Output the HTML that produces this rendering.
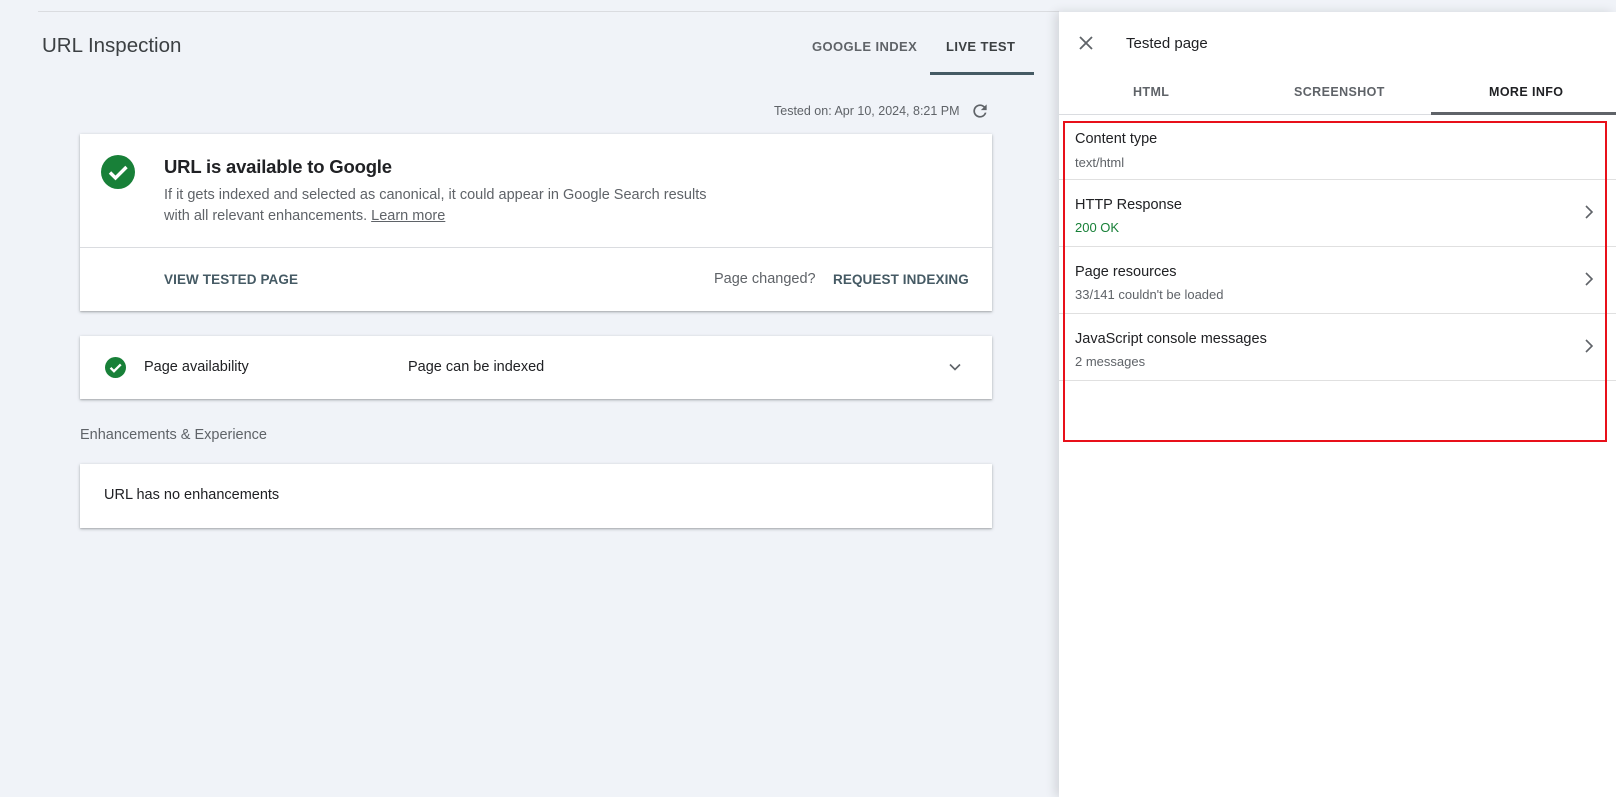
<!DOCTYPE html>
<html><head><meta charset="utf-8"><style>
*{margin:0;padding:0;box-sizing:border-box}
body{width:1616px;height:797px;background:#f0f3f8;font-family:"Liberation Sans",Arial,sans-serif;position:relative;overflow:hidden;color:#202124}
.a{position:absolute;white-space:nowrap}
.card{position:absolute;background:#fff;box-shadow:0 1px 3px rgba(60,64,67,.35),0 1px 1px rgba(60,64,67,.15)}
.tab{font-size:13px;letter-spacing:.4px;font-weight:bold;color:#5f6368}
.row{position:absolute;left:1059px;width:557px;height:67px;border-bottom:1px solid #e0e0e0}
.row .t{position:absolute;left:16px;top:10px;font-size:14.5px;color:#202124}
.row .s{position:absolute;left:16px;top:34px;font-size:13px;color:#5f6368}
.row svg{position:absolute;right:20px;top:24px}
</style></head><body>
<div class="a" style="left:38px;top:11px;width:1021px;height:1px;background:#dadce0"></div>
<div class="a" style="left:42px;top:34px;font-size:20.5px;color:#3c4043">URL Inspection</div>
<div class="a tab" style="left:812px;top:39px">GOOGLE INDEX</div>
<div class="a tab" style="left:946px;top:39px;color:#3c4043">LIVE TEST</div>
<div class="a" style="left:930px;top:72px;width:104px;height:3px;background:#455a64"></div>
<div class="a" style="left:774px;top:104px;font-size:12.5px;color:#5f6368">Tested on: Apr 10, 2024, 8:21 PM</div>
<svg class="a" style="left:970px;top:101px" width="20" height="20" viewBox="0 0 24 24"><path fill="#5f6368" d="M17.65 6.35A7.958 7.958 0 0 0 12 4a8 8 0 1 0 7.73 10h-2.08A5.99 5.99 0 0 1 12 18a6 6 0 1 1 0-12c1.66 0 3.14.69 4.22 1.78L13 11h7V4l-2.35 2.35z"/></svg>

<div class="card" style="left:80px;top:134px;width:912px;height:177px">
  <svg class="a" style="left:21px;top:21px" width="34" height="34" viewBox="0 0 34 34"><circle cx="17" cy="17" r="17" fill="#188038"/><path d="M9 17.5l5.5 5.5L25.5 12" stroke="#fff" stroke-width="3.4" fill="none"/></svg>
  <div class="a" style="left:84px;top:22px;font-size:18.5px;font-weight:bold;letter-spacing:-.2px;color:#202124">URL is available to Google</div>
  <div class="a" style="left:84px;top:51px;font-size:14.5px;color:#5f6368;line-height:21px">If it gets indexed and selected as canonical, it could appear in Google Search results<br>with all relevant enhancements. <span style="text-decoration:underline">Learn more</span></div>
  <div class="a" style="left:0;top:113px;width:912px;height:1px;background:#dadce0"></div>
  <div class="a" style="left:84px;top:138px;font-size:13.5px;font-weight:bold;letter-spacing:.1px;color:#455a64">VIEW TESTED PAGE</div>
  <div class="a" style="left:634px;top:137px;font-size:14.5px;color:#5f6368">Page changed?</div>
  <div class="a" style="left:753px;top:138px;font-size:13.5px;font-weight:bold;letter-spacing:.1px;color:#455a64">REQUEST INDEXING</div>
</div>

<div class="card" style="left:80px;top:336px;width:912px;height:63px">
  <svg class="a" style="left:25px;top:21px" width="21" height="21" viewBox="0 0 34 34"><circle cx="17" cy="17" r="17" fill="#188038"/><path d="M9 17.5l5.5 5.5L25.5 12" stroke="#fff" stroke-width="3.8" fill="none"/></svg>
  <div class="a" style="left:64px;top:23px;font-size:14.5px">Page availability</div>
  <div class="a" style="left:328px;top:23px;font-size:14.5px">Page can be indexed</div>
  <svg class="a" style="left:867px;top:23px" width="16" height="16" viewBox="0 0 16 16"><path d="M3 5.5l5 5 5-5" stroke="#5f6368" stroke-width="1.6" fill="none"/></svg>
</div>
<div class="a" style="left:80px;top:427px;font-size:14.5px;color:#5f6368">Enhancements &amp; Experience</div>
<div class="card" style="left:80px;top:464px;width:912px;height:64px">
  <div class="a" style="left:24px;top:23px;font-size:14.5px">URL has no enhancements</div>
</div>

<div class="a" style="left:1059px;top:12px;width:557px;height:785px;background:#fff;box-shadow:-4px 0 10px rgba(0,0,0,.12)"></div>
<svg class="a" style="left:1078px;top:35px" width="16" height="16" viewBox="0 0 16 16"><path d="M2 2l12 12M14 2L2 14" stroke="#5f6368" stroke-width="1.8"/></svg>
<div class="a" style="left:1126px;top:35px;font-size:15px;color:#202124">Tested page</div>
<div class="a tab" style="left:1133px;top:85px;font-size:12.5px">HTML</div>
<div class="a tab" style="left:1294px;top:85px;font-size:12.5px">SCREENSHOT</div>
<div class="a tab" style="left:1489px;top:85px;font-size:12.5px;color:#202124">MORE INFO</div>
<div class="a" style="left:1059px;top:114px;width:557px;height:1px;background:#dadce0"></div>
<div class="a" style="left:1431px;top:112px;width:185px;height:3px;background:#5f6368"></div>

<div class="row" style="top:113px"><div class="t" style="top:18px">Content type</div><div class="s" style="top:42px">text/html</div></div>
<div class="row" style="top:180px"><div class="t" style="top:17px">HTTP Response</div><div class="s" style="top:40px;color:#188038">200 OK</div><svg width="14" height="16" viewBox="0 0 14 16"><path d="M4 2l6 6-6 6" stroke="#5f6368" stroke-width="1.6" fill="none"/></svg></div>
<div class="row" style="top:247px"><div class="t" style="top:17px">Page resources</div><div class="s" style="top:40px">33/141 couldn't be loaded</div><svg width="14" height="16" viewBox="0 0 14 16"><path d="M4 2l6 6-6 6" stroke="#5f6368" stroke-width="1.6" fill="none"/></svg></div>
<div class="row" style="top:314px"><div class="t" style="top:17px">JavaScript console messages</div><div class="s" style="top:40px">2 messages</div><svg width="14" height="16" viewBox="0 0 14 16"><path d="M4 2l6 6-6 6" stroke="#5f6368" stroke-width="1.6" fill="none"/></svg></div>

<div class="a" style="left:1063px;top:121px;width:544px;height:321px;border:2px solid #e8101a"></div>
</body></html>
